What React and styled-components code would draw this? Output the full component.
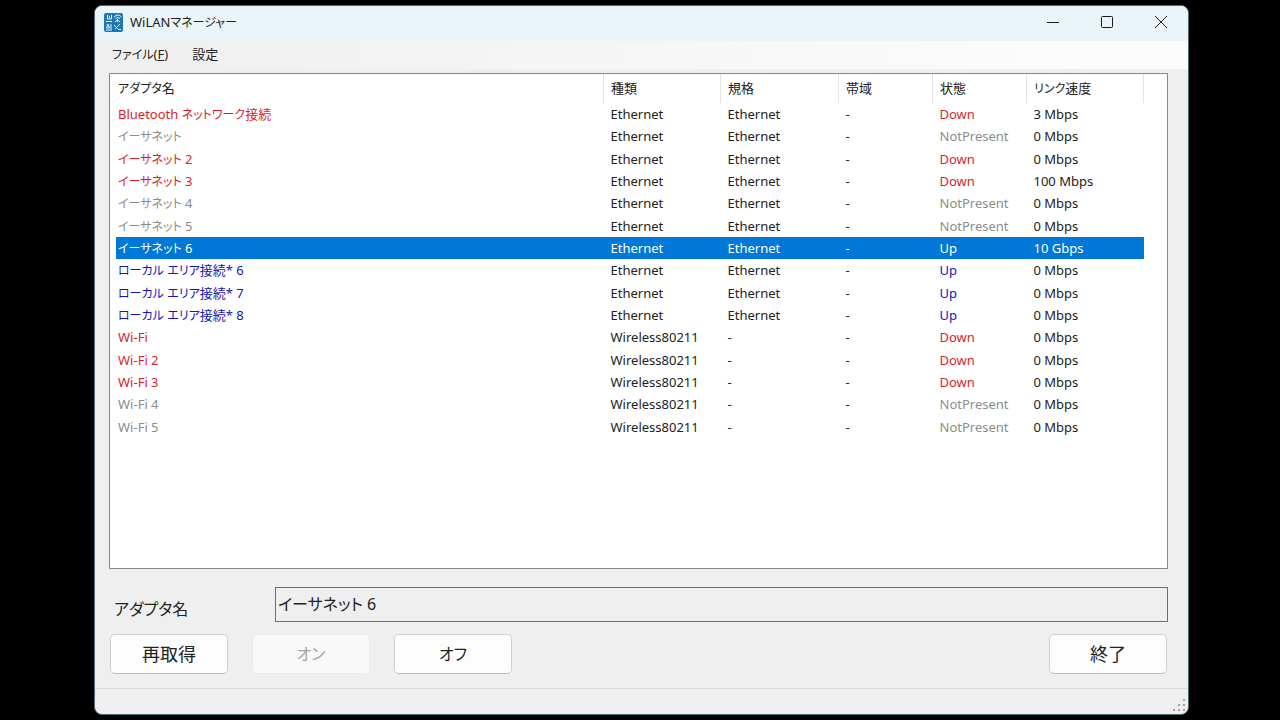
import styled, { createGlobalStyle } from "styled-components";

const GlobalStyle = createGlobalStyle`
  * {
    box-sizing: border-box;
  }

  body {
    margin: 0;
    background: #000000;
    color: #222222;
    font-family: "Noto Sans", "Noto Sans CJK JP", sans-serif;
    font-feature-settings: "palt";
    font-size: 13px;
  }

  button,
  input {
    font: inherit;
    font-feature-settings: inherit;
    color: inherit;
  }
`;

const Desktop = styled.div`
  display: flex;
  min-height: 100vh;
  padding: 5px 91px 5px 94px;
`;

const Window = styled.main`
  display: flex;
  flex-direction: column;
  flex: 1;
  min-width: 0;
  overflow: hidden;
  background: #efefef;
  border: 1px solid #4d6b75;
  border-radius: 8px;
`;

const Kana = styled.span`
  font-size: 12px;
  line-height: 1;
`;

const TitleBar = styled.header`
  display: flex;
  align-items: center;
  gap: 7px;
  height: 35px;
  padding: 0 0 3px 9px;
  background: #eaf4f9;
`;

const Title = styled.h1`
  flex: 1;
  margin: 0;
  font-size: 13px;
  font-weight: 400;
`;

const CaptionButtons = styled.div`
  display: flex;
`;

const CaptionButton = styled.button`
  display: flex;
  align-items: center;
  justify-content: center;
  width: 54px;
  height: 32px;
  padding: 0;
  border: 0;
  background: transparent;
`;

const MenuBar = styled.nav`
  display: flex;
  gap: 24px;
  height: 28px;
  padding: 0 0 3px 17px;
  background: linear-gradient(90deg, #efefef, #fcfcfc 90%);
`;

const MenuItem = styled.button`
  padding: 0;
  border: 0;
  background: transparent;
`;

const Content = styled.div`
  display: flex;
  flex-direction: column;
  flex: 1;
  padding: 4px 20px 14px 14px;
`;

const ListView = styled.div`
  flex: 1;
  padding: 0 23px 0 6px;
  border: 1px solid #828790;
  background: #ffffff;
`;

const AdapterTable = styled.table`
  width: 100%;
  height: 364px;
  table-layout: fixed;
  border-collapse: collapse;
  line-height: 20px;
`;

const HeadRow = styled.tr`
  height: 29px;
`;

const HeadCell = styled.th`
  width: ${({ $width }) => $width};
  padding: 0 0 1px ${({ $first }) => ($first ? "2px" : "7px")};
  border-right: 1px solid #e3e3e3;
  font-weight: 400;
  text-align: left;
`;

const Row = styled.tr`
  background: ${({ $selected }) => ($selected ? "#0078d7" : "transparent")};
  color: ${({ $selected }) => ($selected ? "#ffffff" : "inherit")};
`;

const Cell = styled.td`
  padding: 0 0 0 ${({ $first }) => ($first ? "2px" : "7px")};
  color: ${({ $color }) => $color || "inherit"};
  white-space: nowrap;
`;

const NameField = styled.div`
  display: flex;
  align-items: center;
  margin-top: 18px;
  font-size: 16px;
`;

const NameLabel = styled.label`
  width: 166px;
  padding: 8px 0 0 5px;
  line-height: 26px;
`;

const NameInput = styled.input`
  flex: 1;
  min-width: 0;
  height: 35px;
  padding: 0 2px 4px;
  border: 1px solid #6f6f6f;
  border-radius: 0;
  background: #efefef;
  outline: 0;
`;

const Actions = styled.div`
  display: flex;
  gap: 24px;
  margin-top: 12px;
  padding: 0 1px;
`;

const ActionButton = styled.button`
  width: 118px;
  height: 40px;
  padding: 0 0 2px;
  margin-left: ${({ $end }) => ($end ? "auto" : "0")};
  border: 1px solid #d0d0d0;
  border-bottom-color: #bdbdbd;
  border-radius: 5px;
  background: #fdfdfd;
  font-size: 18px;

  ${Kana} {
    font-size: 16px;
  }

  &:disabled {
    border-color: #ebebeb;
    background: #f9f9f9;
    color: #a3a3a3;
  }
`;

const StatusBar = styled.footer`
  display: flex;
  align-items: flex-end;
  justify-content: flex-end;
  height: 26px;
  padding: 0 2px 2px 0;
  border-top: 1px solid #dadada;
`;

const statusColors = {
  Down: "#d81e2c",
  Up: "#1414b8",
  NotPresent: "#8c8c8c",
};

const columns = [
  { label: "アダプタ名", width: "auto" },
  { label: "種類", width: "117px" },
  { label: "規格", width: "118px" },
  { label: "帯域", width: "94px" },
  { label: "状態", width: "94px" },
  { label: "リンク速度", width: "117px" },
];

const adapters = [
  ["Bluetooth ネットワーク接続", "Ethernet", "Ethernet", "-", "Down", "3 Mbps"],
  ["イーサネット", "Ethernet", "Ethernet", "-", "NotPresent", "0 Mbps"],
  ["イーサネット 2", "Ethernet", "Ethernet", "-", "Down", "0 Mbps"],
  ["イーサネット 3", "Ethernet", "Ethernet", "-", "Down", "100 Mbps"],
  ["イーサネット 4", "Ethernet", "Ethernet", "-", "NotPresent", "0 Mbps"],
  ["イーサネット 5", "Ethernet", "Ethernet", "-", "NotPresent", "0 Mbps"],
  ["イーサネット 6", "Ethernet", "Ethernet", "-", "Up", "10 Gbps"],
  ["ローカル エリア接続* 6", "Ethernet", "Ethernet", "-", "Up", "0 Mbps"],
  ["ローカル エリア接続* 7", "Ethernet", "Ethernet", "-", "Up", "0 Mbps"],
  ["ローカル エリア接続* 8", "Ethernet", "Ethernet", "-", "Up", "0 Mbps"],
  ["Wi-Fi", "Wireless80211", "-", "-", "Down", "0 Mbps"],
  ["Wi-Fi 2", "Wireless80211", "-", "-", "Down", "0 Mbps"],
  ["Wi-Fi 3", "Wireless80211", "-", "-", "Down", "0 Mbps"],
  ["Wi-Fi 4", "Wireless80211", "-", "-", "NotPresent", "0 Mbps"],
  ["Wi-Fi 5", "Wireless80211", "-", "-", "NotPresent", "0 Mbps"],
];

const selectedName = "イーサネット 6";

// Katakana runs are set one step smaller than the Latin text and kanji
const withKana = (text) =>
  text
    .split(/([ァ-ー]+)/)
    .map((part, i) => (i % 2 ? <Kana key={i}>{part}</Kana> : part));

const AppIcon = () => (
  <svg width="19" height="19" viewBox="0 0 19 19" fill="none" aria-hidden="true">
    <rect width="19" height="19" rx="2" fill="#2176b5" />
    <g stroke="#e6f3fb" strokeWidth="1">
      <path d="M3.500 2v4h4V2M5.500 3v2M2 8.500h6" />
      <path d="M10 4q4-4 7.500 0M11.500 5.500q2.500-2 4.500 0M13.500 6v3M11 9l2.500-2L16 9" />
      <path d="M4 11l-1.500 4h3zM7 11v5M2 17h6M10 12l5 5M16 11l-5 5M14 16.500h3" />
    </g>
  </svg>
);

const SizeGrip = () => (
  <svg width="13" height="13" viewBox="0 0 13 13" fill="#a0a0a0" aria-hidden="true">
    <path d="M10 0h2v2h-2zM5 5h2v2H5zM10 5h2v2h-2zM0 10h2v2H0zM5 10h2v2H5zM10 10h2v2h-2z" />
  </svg>
);

export default function App() {
  return (
    <>
      <GlobalStyle />
      <Desktop>
        <Window>
          <TitleBar>
            <AppIcon />
            <Title>{withKana("WiLANマネージャー")}</Title>
            <CaptionButtons>
              <CaptionButton aria-label="最小化">
                <svg width="12" height="12" stroke="#1c1c1c">
                  <path d="M0 6.500h12" />
                </svg>
              </CaptionButton>
              <CaptionButton aria-label="最大化">
                <svg width="12" height="12" stroke="#1c1c1c" fill="none">
                  <rect x="0.500" y="0.500" width="11" height="11" rx="1" />
                </svg>
              </CaptionButton>
              <CaptionButton aria-label="閉じる">
                <svg width="12" height="12" stroke="#1c1c1c">
                  <path d="M0 0l12 12M12 0L0 12" />
                </svg>
              </CaptionButton>
            </CaptionButtons>
          </TitleBar>
          <MenuBar>
            <MenuItem>
              {withKana("ファイル")}(<u>F</u>)
            </MenuItem>
            <MenuItem>設定</MenuItem>
          </MenuBar>
          <Content>
            <ListView>
              <AdapterTable>
                <thead>
                  <HeadRow>
                    {columns.map((column, i) => (
                      <HeadCell key={column.label} $width={column.width} $first={i === 0}>
                        {withKana(column.label)}
                      </HeadCell>
                    ))}
                  </HeadRow>
                </thead>
                <tbody>
                  {adapters.map(([name, type, standard, band, status, speed]) => {
                    const selected = name === selectedName;
                    const color = selected ? undefined : statusColors[status];
                    return (
                      <Row key={name} $selected={selected}>
                        <Cell $first $color={color}>{withKana(name)}</Cell>
                        <Cell>{type}</Cell>
                        <Cell>{standard}</Cell>
                        <Cell>{band}</Cell>
                        <Cell $color={color}>{status}</Cell>
                        <Cell>{speed}</Cell>
                      </Row>
                    );
                  })}
                </tbody>
              </AdapterTable>
            </ListView>
            <NameField>
              <NameLabel htmlFor="adapter-name">アダプタ名</NameLabel>
              <NameInput id="adapter-name" value={selectedName} readOnly />
            </NameField>
            <Actions>
              <ActionButton>再取得</ActionButton>
              <ActionButton disabled>{withKana("オン")}</ActionButton>
              <ActionButton>{withKana("オフ")}</ActionButton>
              <ActionButton $end>終了</ActionButton>
            </Actions>
          </Content>
          <StatusBar>
            <SizeGrip />
          </StatusBar>
        </Window>
      </Desktop>
    </>
  );
}
